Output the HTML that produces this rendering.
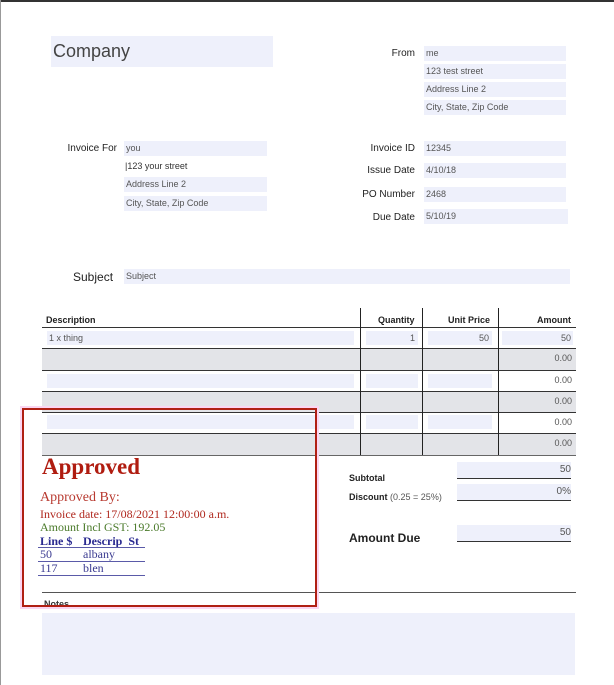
<!DOCTYPE html>
<html><head><meta charset="utf-8"><style>
*{margin:0;padding:0;box-sizing:border-box}
body{width:614px;height:685px;background:#fff;position:relative;overflow:hidden;font-family:"Liberation Sans",sans-serif;color:#222}
.a{position:absolute;white-space:nowrap}
.f{position:absolute;background:#eef0fb;font-size:9px;color:#555;padding-left:2px;line-height:15px}
.l{position:absolute;font-size:10px;color:#222;text-align:right}
.s{font-family:"Liberation Serif",serif}
.hl{position:absolute;height:1px;background:#333}
.vl{position:absolute;width:1px;background:#222;top:308px;height:147px}
.g{position:absolute;background:#e3e4e8;left:42px;width:534px;height:21px}
.n{position:absolute;font-size:9px;color:#555;text-align:right}
</style></head><body>
<div class="a" style="left:0;top:0;width:614px;height:2px;background:#333"></div>
<div class="a" style="left:0;top:0;width:1px;height:685px;background:#999"></div>

<div class="f" style="left:51px;top:36px;width:222px;height:31px;font-size:18px;line-height:30px;color:#444">Company</div>
<div class="l" style="left:360px;top:48px;width:55px">From</div>
<div class="f" style="left:424px;top:46px;width:142px">me</div>
<div class="f" style="left:424px;top:64px;width:142px">123 test street</div>
<div class="f" style="left:424px;top:82px;width:142px">Address Line 2</div>
<div class="f" style="left:424px;top:100px;width:142px">City, State, Zip Code</div>

<div class="l" style="left:40px;top:143px;width:77px">Invoice For</div>
<div class="f" style="left:124px;top:141px;width:143px">you</div>
<div class="a" style="left:125px;top:161px;font-size:9px;color:#333">|123 your street</div>
<div class="f" style="left:124px;top:177px;width:143px">Address Line 2</div>
<div class="f" style="left:124px;top:196px;width:143px">City, State, Zip Code</div>

<div class="l" style="left:330px;top:143px;width:85px">Invoice ID</div>
<div class="f" style="left:424px;top:141px;width:142px">12345</div>
<div class="l" style="left:330px;top:165px;width:85px">Issue Date</div>
<div class="f" style="left:424px;top:163px;width:142px">4/10/18</div>
<div class="l" style="left:330px;top:189px;width:85px">PO Number</div>
<div class="f" style="left:424px;top:187px;width:142px">2468</div>
<div class="l" style="left:330px;top:212px;width:85px">Due Date</div>
<div class="f" style="left:424px;top:209px;width:144px">5/10/19</div>

<div class="a" style="left:73px;top:270px;font-size:12px">Subject</div>
<div class="f" style="left:124px;top:269px;width:446px">Subject</div>

<div class="g" style="top:349px"></div>
<div class="g" style="top:391px"></div>
<div class="g" style="top:434px"></div>
<div class="a" style="left:46px;top:315px;font-size:9px;font-weight:bold">Description</div>
<div class="a" style="left:378px;top:315px;font-size:9px;font-weight:bold">Quantity</div>
<div class="a" style="left:448px;top:315px;font-size:9px;font-weight:bold">Unit Price</div>
<div class="a" style="left:537px;top:315px;font-size:9px;font-weight:bold">Amount</div>
<div class="hl" style="left:42px;width:534px;top:327px"></div>
<div class="hl" style="left:42px;width:534px;top:348px"></div>
<div class="hl" style="left:42px;width:534px;top:370px"></div>
<div class="hl" style="left:42px;width:534px;top:391px"></div>
<div class="hl" style="left:42px;width:534px;top:412px"></div>
<div class="hl" style="left:42px;width:534px;top:433px"></div>
<div class="hl" style="left:42px;width:534px;top:455px;background:#666"></div>
<div class="vl" style="left:360px"></div>
<div class="vl" style="left:422px"></div>
<div class="vl" style="left:498px"></div>
<div class="f" style="left:47px;top:331px;width:307px;height:14px;line-height:14px">1 x thing</div>
<div class="f" style="left:366px;top:331px;width:52px;height:14px;line-height:14px;text-align:right;padding-right:3px">1</div>
<div class="f" style="left:428px;top:331px;width:64px;height:14px;line-height:14px;text-align:right;padding-right:3px">50</div>
<div class="f" style="left:502px;top:331px;width:71px;height:14px;line-height:14px;text-align:right;padding-right:2px">50</div>
<div class="f" style="left:47px;top:374px;width:307px;height:14px"></div>
<div class="f" style="left:366px;top:374px;width:52px;height:14px"></div>
<div class="f" style="left:428px;top:374px;width:64px;height:14px"></div>
<div class="f" style="left:47px;top:415px;width:307px;height:14px"></div>
<div class="f" style="left:366px;top:415px;width:52px;height:14px"></div>
<div class="f" style="left:428px;top:415px;width:64px;height:14px"></div>
<div class="n" style="left:500px;top:353px;width:72px">0.00</div>
<div class="n" style="left:500px;top:375px;width:72px">0.00</div>
<div class="n" style="left:500px;top:396px;width:72px">0.00</div>
<div class="n" style="left:500px;top:417px;width:72px">0.00</div>
<div class="n" style="left:500px;top:438px;width:72px">0.00</div>

<div class="a" style="left:349px;top:473px;font-size:9px;font-weight:bold">Subtotal</div>
<div class="f" style="left:457px;top:462px;width:114px;height:16px;text-align:right;padding-right:0;font-size:10px">50</div>
<div class="hl" style="left:457px;width:114px;top:478px"></div>
<div class="a" style="left:349px;top:492px;font-size:9px"><b>Discount</b> <span style="color:#555">(0.25 = 25%)</span></div>
<div class="f" style="left:457px;top:484px;width:114px;height:16px;text-align:right;padding-right:0;font-size:10px">0%</div>
<div class="hl" style="left:457px;width:114px;top:500px"></div>
<div class="a" style="left:349px;top:531px;font-size:12px;font-weight:bold">Amount Due</div>
<div class="f" style="left:457px;top:525px;width:114px;height:16px;text-align:right;padding-right:0;font-size:10px">50</div>
<div class="hl" style="left:457px;width:114px;top:541px"></div>

<div class="hl" style="left:42px;width:534px;top:592px;background:#555"></div>
<div class="a" style="left:44px;top:599px;font-size:9px;font-weight:bold;color:#333">Notes</div>
<div class="a" style="left:42px;top:613px;width:533px;height:62px;background:#eef0fb"></div>

<div class="a" style="left:20px;top:406px;width:299px;height:203px;border:2px solid #fbd6f2"></div>
<div class="a" style="left:22px;top:408px;width:295px;height:199px;border:2px solid #b02014"></div>
<div class="a s" style="left:42px;top:454px;font-size:23px;font-weight:bold;color:#b01c10">Approved</div>
<div class="a s" style="left:40px;top:490px;font-size:14px;color:#b83a30">Approved By:</div>
<div class="a s" style="left:40px;top:507px;font-size:12px;color:#b0281e">Invoice date: 17/08/2021 12:00:00 a.m.</div>
<div class="a s" style="left:40px;top:520px;font-size:12px;color:#4a7a2a">Amount Incl GST: 192.05</div>
<div class="a s" style="left:40px;top:534px;font-size:12px;font-weight:bold;color:#2a2a90">Line $</div>
<div class="a s" style="left:83px;top:534px;font-size:12px;font-weight:bold;color:#2a2a90">Descrip&nbsp; St</div>
<div class="hl" style="left:38px;width:107px;top:547px;background:#5a5aa8"></div>
<div class="a s" style="left:40px;top:547px;font-size:12px;color:#3a3a90">50</div>
<div class="a s" style="left:83px;top:547px;font-size:12px;color:#3a3a90">albany</div>
<div class="hl" style="left:38px;width:107px;top:561px;background:#5a5aa8"></div>
<div class="a s" style="left:40px;top:561px;font-size:12px;color:#3a3a90">117</div>
<div class="a s" style="left:83px;top:561px;font-size:12px;color:#3a3a90">blen</div>
<div class="hl" style="left:38px;width:107px;top:575px;background:#5a5aa8"></div>
</body></html>
